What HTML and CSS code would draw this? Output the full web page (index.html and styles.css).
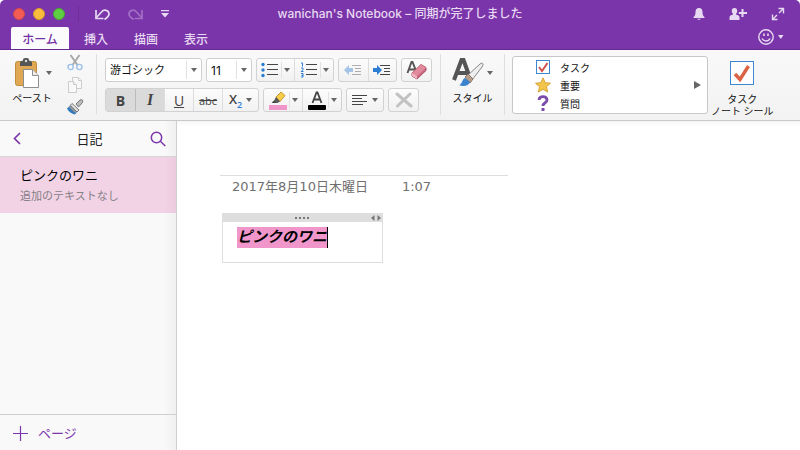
FILE: index.html
```html
<!DOCTYPE html>
<html lang="ja">
<head>
<meta charset="utf-8">
<title>wanichan's Notebook</title>
<link rel="stylesheet" href="styles.css">
</head>
<body>
<div class="window">
  <header class="titlebar">
    <div class="title-row">
      <div class="lights">
        <button class="light red" aria-label="閉じる"></button>
        <button class="light yellow" aria-label="しまう"></button>
        <button class="light green" aria-label="拡大"></button>
      </div>
      <div class="quick">
        <button aria-label="元に戻す"><svg width="17" height="14" viewBox="0 0 17 14" fill="none" stroke="currentColor" stroke-width="1.700"><path d="M2 11 7.500 5C10 2 14.500 3 15 6.500c.3 2.500-1.500 4-4.500 6"/><path d="M2 3v8.500h7.500"/></svg></button>
        <button class="dim" aria-label="やり直し"><svg width="17" height="14" viewBox="0 0 17 14" fill="none" stroke="currentColor" stroke-width="1.700"><path d="M15 11 9.500 5C7 2 2.500 3 2 6.500c-.3 2.500 1.500 4 4.500 6"/><path d="M15 3v8.500H7.500"/></svg></button>
        <button aria-label="カスタマイズ"><svg width="10" height="10" viewBox="0 0 10 10" fill="currentColor"><path d="M1 1h8v1.300H1zM1 4h8L5 8.500z"/></svg></button>
      </div>
      <h1>wanichan's Notebook – 同期が完了しました</h1>
      <div class="window-tools">
        <button aria-label="通知"><svg width="12" height="14" viewBox="0 0 12 14" fill="currentColor"><path d="M6 1c2.600 0 3.500 1.800 3.500 4 0 3 .7 3.800 2 5v1H.5v-1c1.300-1.200 2-2 2-5C2.500 2.800 3.400 1 6 1zM4.300 11.800h3.400C7.500 13.200 4.500 13.200 4.300 11.800z"/></svg></button>
        <button aria-label="共有"><svg width="18" height="14" viewBox="0 0 18 14" fill="currentColor"><path d="M5.500 1c1.900 0 2.700 1.200 2.700 3 0 1.300-.5 2.200-1.200 2.800v.7c2 .6 3.500 1 3.500 3V13H.5v-2.500c0-2 1.500-2.400 3.500-3v-.7C3.300 6.200 2.800 5.300 2.800 4c0-1.800.8-3 2.700-3zM12.500 2h2v3H18v2h-3.500v3h-2V7H9.800V5h2.700z"/></svg></button>
        <button aria-label="全画面"><svg width="14" height="14" viewBox="0 0 14 14" fill="none" stroke="currentColor" stroke-width="1.400"><path d="M7.500 1.500h5V6.500M12.500 1.500 8 6M6.500 12.500h-5V7.500M1.500 12.500 6 8"/></svg></button>
      </div>
    </div>
    <nav class="tabs">
      <a class="active" href="#home">ホーム</a>
      <a href="#insert">挿入</a>
      <a href="#draw">描画</a>
      <a href="#view">表示</a>
      <button class="feedback" aria-label="フィードバック"><svg width="26" height="18" viewBox="0 0 26 18" fill="none" stroke="currentColor" stroke-width="1.400"><circle cx="8" cy="8" r="7.200"/><path d="M4 9.500c1.500 3.300 6.500 3.300 8 0"/><path d="M6 4.500V7M10 4.500V7" stroke-width="1.600"/><path d="M20 6h5.500l-2.700 4z" fill="currentColor" stroke="none"/></svg></button>
    </nav>
  </header>

  <section class="ribbon" aria-label="ホーム">
    <div class="group clipboard">
      <button class="big">
        <span class="big-icon"><svg width="26" height="32" viewBox="0 0 26 32"><rect x="1.500" y="4.500" width="21" height="24" rx="2" fill="#e0a852" stroke="#c18d3c"/><path d="M6 9V5.500C6 4 8 4 9 3.500 9 1 10.500 1 12 1s3 0 3 2.500c1 .5 3 .5 3 2V9z" fill="#565656"/><circle cx="12" cy="4" r="1.200" fill="#ddd"/><path d="M9.500 12.500h9l6 6v12h-15z" fill="#fff" stroke="#8e8e8e"/><path d="M18.500 12.500v6h6" fill="#eee" stroke="#8e8e8e"/></svg><i class="caret"></i></span>
        <span>ペースト</span>
      </button>
      <div class="small-tools">
        <button aria-label="カット"><svg width="16" height="17" viewBox="0 0 16 17" fill="none"><path d="M3.500 1 10.500 11M12.500 1 5.500 11" stroke="#aaa" stroke-width="2"/><circle cx="3.600" cy="13" r="2.600" stroke="#9dc0e8" stroke-width="1.400"/><circle cx="12.400" cy="13" r="2.600" stroke="#9dc0e8" stroke-width="1.400"/></svg></button>
        <button aria-label="コピー"><svg width="16" height="16" viewBox="0 0 16 16" fill="#f8f8f8" stroke="#ccc"><path d="M5.500.5h6l3 3v8h-9z"/><path d="M1.500 4.500h5l3 3v8h-8z"/><path d="M6.500 4.500v3h3M11.500.5v3h3"/></svg></button>
        <button aria-label="書式のコピー"><svg width="18" height="16" viewBox="0 0 18 16"><path d="m10 5 4-4c2-1 3.500.5 2.500 2.500L12.500 8z" fill="#bbb" stroke="#777"/><path d="M6 4.500 13 11 11 13 4.200 6.500z" fill="#e5e0dc" stroke="#777"/><path d="M4.200 6.500 11 13 9 15.500C5.500 15 2.500 12.500 1 9.500z" fill="#3279bd"/><path d="M4 7 10.500 13l-1 1L3 8z" fill="#b29b86"/></svg></button>
      </div>
    </div>

    <div class="group format">
      <div class="tool-row">
        <label class="pick font"><select aria-label="フォント"><option>游ゴシック</option></select><i class="caret"></i></label>
        <label class="pick size"><select aria-label="フォント サイズ"><option>11</option></select><i class="caret"></i></label>
        <div class="segment">
          <button class="wide" aria-label="箇条書き"><svg width="18" height="16" viewBox="0 0 18 16"><g fill="#2b7cd3"><circle cx="2" cy="2.500" r="1.700"/><circle cx="2" cy="8" r="1.700"/><circle cx="2" cy="13.500" r="1.700"/></g><path d="M6 2.500h11M6 7.500h11M6 12.500h11" stroke="#444"/></svg><i class="caret split"></i></button>
          <button class="wide" aria-label="段落番号"><svg width="18" height="16" viewBox="0 0 18 16"><path d="M1 1h1.500v3.500M1 6h2v1.700L1.200 9.500H3.500M1 11.500h2v3.500H1M1.500 13.300H3" fill="none" stroke="#2b7cd3"/><path d="M6 2.500h11M6 7.500h11M6 12.500h11" stroke="#444"/></svg><i class="caret split"></i></button>
        </div>
        <div class="segment">
          <button class="dim-tool" aria-label="インデント解除"><svg width="18" height="14" viewBox="0 0 18 14"><path d="M0 7 5 2v3h4v4H5v3z" fill="#2b7cd3"/><path d="M8 2.500h9M11 5.500h6M11 8.500h6M8 11.500h9" stroke="#444"/></svg></button>
          <button aria-label="インデント"><svg width="18" height="14" viewBox="0 0 18 14"><path d="M9 7 4 2v3H0v4h4v3z" fill="#2b7cd3"/><path d="M7 2.500h10M11 5.500h6M11 8.500h6M7 11.500h10" stroke="#444"/></svg></button>
        </div>
        <div class="segment">
          <button aria-label="書式のクリア"><svg width="22" height="20" viewBox="0 0 22 20"><path d="M1.500 13 5.500 2h1L10.500 12M3 9.500h6" fill="none" stroke="#555" stroke-width="1.900"/><path d="m6 13 9-8.500 5 3v3l-9 8.500-5-3z" fill="#c96a80" stroke="#a94b63"/><path d="m6 13 9-8.500 5 3-9 8.500z" fill="#e28a9d"/><path d="m6 13 5 3v3l-5-3z" fill="#f0b7c2"/></svg></button>
        </div>
      </div>
      <div class="tool-row">
        <div class="segment">
          <button class="on" aria-label="太字"><b>B</b></button>
          <button class="on" aria-label="斜体"><em>I</em></button>
          <button aria-label="下線"><u>U</u></button>
          <button aria-label="取り消し線"><s>abc</s></button>
          <button class="menu" aria-label="下付き"><span class="subscript">X<sub>2</sub></span><i class="caret"></i></button>
        </div>
        <div class="segment">
          <button class="wide" aria-label="蛍光ペン"><svg width="18" height="19" viewBox="0 0 18 19"><path d="m7 6 5-5 4 3.500-5 6z" fill="#f7ce4c" stroke="#c59a2b"/><path d="m7 6 4 4.500-2.500 1.500-3-3z" fill="#555"/><path d="m5.500 9 3 3H2.500z" fill="#444"/><path d="M0 14h18v5H0z" fill="#f096cb"/></svg><i class="caret split"></i></button>
          <button class="wide" aria-label="フォントの色"><svg width="18" height="19" viewBox="0 0 18 19"><path d="M4.500 12 8.500 1.500h1L13.500 12M6 8.500h6" fill="none" stroke="#444" stroke-width="1.800"/><rect y="14" width="18" height="5" rx="1"/></svg><i class="caret split"></i></button>
        </div>
        <div class="segment">
          <button class="menu" aria-label="配置"><svg width="16" height="12" viewBox="0 0 16 12" stroke="#444"><path d="M0 1.500h15M0 4.500h10M0 7.500h15M0 10.500h11"/></svg><i class="caret"></i></button>
        </div>
        <div class="segment">
          <button aria-label="削除"><svg width="18" height="16" viewBox="0 0 18 16" fill="none" stroke="#c2c2c2" stroke-width="3" stroke-linecap="round"><path d="m2 2 14 12M15 2 2.500 14"/></svg></button>
        </div>
      </div>
    </div>

    <div class="group styles">
      <button class="big">
        <span class="big-icon"><svg width="32" height="32" viewBox="0 0 32 32"><path d="M2 23 9.500 3h2L18 21M5.500 16h10" fill="none" stroke="#555" stroke-width="4"/><path d="m15 19 13-12c3-2 4 0 2 3L20 23z" fill="#eee" stroke="#888"/><path d="m13 20 3-3 5 5-3 4z" fill="#b79f8b" stroke="#887464"/><path d="M7 28c3 0 3-6 6-7l5 4c-1 4-7 5-11 3z" fill="#3b83cc"/></svg><i class="caret"></i></span>
        <span>スタイル</span>
      </button>
    </div>

    <div class="group tags">
      <div class="gallery">
        <ul>
          <li><svg width="16" height="16" viewBox="0 0 16 16"><rect x="1.500" y="1.500" width="13" height="13" fill="#fff" stroke="#3c87d0"/><path d="m4 8 3 4 5.500-8" fill="none" stroke="#d0504b" stroke-width="2"/></svg>タスク</li>
          <li><svg width="16" height="16" viewBox="0 0 16 16"><path d="m8 .8 2.200 4.900 5.300.5-4 3.600 1.200 5.300L8 12.300l-4.700 2.800 1.200-5.300-4-3.600 5.300-.5z" fill="#f2c44c" stroke="#d6a536"/></svg>重要</li>
          <li><svg width="16" height="16" viewBox="0 0 16 16"><path d="M4 5c0-4.500 8-4.500 8 0 0 3-4 2.500-4 6" fill="none" stroke="#7b4bab" stroke-width="2.800"/><path d="M6.500 13h3v3h-3z" fill="#7b4bab"/></svg>質問</li>
        </ul>
        <button aria-label="その他のノート シール"><svg width="7" height="10" viewBox="0 0 7 10" fill="#666"><path d="m0 1 7 4-7 4z"/></svg></button>
      </div>
      <button class="big tag-button">
        <svg width="26" height="26" viewBox="0 0 26 26"><rect x="1.500" y="1.500" width="23" height="23" fill="#fff" stroke="#3c87d0"/><path d="m6 14 5 5.500L19.500 6" fill="none" stroke="#db6242" stroke-width="3.400"/></svg>
        <span>タスク<br>ノート シール</span>
      </button>
    </div>
  </section>

  <div class="workspace">
    <aside class="pages">
      <div class="section-head">
        <button aria-label="戻る"><svg width="8" height="13" viewBox="0 0 8 13" fill="none" stroke="currentColor" stroke-width="1.700"><path d="M7 1 1.500 6.500 7 12"/></svg></button>
        <h2>日記</h2>
        <button aria-label="検索"><svg width="16" height="16" viewBox="0 0 16 16" fill="none" stroke="currentColor" stroke-width="1.500"><circle cx="6.500" cy="6.500" r="5.200"/><path d="m10.300 10.300 5 4.700"/></svg></button>
      </div>
      <a class="page-item" href="#page"><strong>ピンクのワニ</strong><span>追加のテキストなし</span></a>
      <button class="add-page"><svg width="16" height="16" viewBox="0 0 16 16" stroke="currentColor" stroke-width="1.200"><path d="M8.500 1v15M1 8.500h15"/></svg>ページ</button>
    </aside>
    <main class="canvas" id="page">
      <div class="page-date"><time>2017年8月10日木曜日</time><time>1:07</time></div>
      <article class="note">
        <div class="note-handle"><svg class="grip" width="14" height="2" viewBox="0 0 14 2" fill="#777"><path d="M0 0h2v2H0zM4 0h2v2H4zM8 0h2v2H8zM12 0h2v2h-2z"/></svg><svg width="10" height="6" viewBox="0 0 10 6" fill="#777"><path d="M3.500 0v6L0 3zM6.500 0v6L10 3z"/></svg></div>
        <p contenteditable="true"><mark>ピンクのワニ</mark></p>
      </article>
    </main>
  </div>
</div>
</body>
</html>
```
FILE: styles.css
```css
* { box-sizing: border-box; }
body {
  margin: 0;
  background: #fff;
  color: #222;
  font-family: Roboto, "Noto Sans CJK JP", sans-serif;
  font-size: 12px;
}
button {
  display: flex;
  align-items: center;
  justify-content: center;
  padding: 0;
  border: 0;
  background: none;
  color: inherit;
  font: inherit;
}
svg { display: block; flex: none; }
a { color: inherit; text-decoration: none; }
h1, h2, p, ul { margin: 0; padding: 0; }

.window { display: flex; flex-direction: column; min-height: 100vh; }

.titlebar { background: #7935a9; border-bottom: 1px solid #652a91; color: #e8d9f2; border-radius: 5px 5px 0 0; }
.title-row { display: grid; grid-template-columns: 1fr auto 1fr; align-items: center; height: 27px; }
.lights { grid-area: 1 / 1; display: flex; gap: 8px; padding-left: 13px; }
.light { width: 12px; height: 12px; border-radius: 50%; border: 1px solid; }
.red { background: #f35c55; border-color: #d44a48; }
.yellow { background: #f9bd3e; border-color: #d99b30; }
.green { background: #5fce43; border-color: #48ab31; }
.quick { grid-area: 1 / 1; display: flex; align-items: center; gap: 16px; margin-left: 78px; padding-left: 15px; border-left: 1px solid #6d2e9a; height: 16px; }
.quick .dim { color: #a26fc4; }
.title-row h1 { grid-column: 2; font: 500 12px/16px Inter, "Noto Sans CJK JP", sans-serif; }
.window-tools { display: flex; justify-content: flex-end; gap: 24px; padding-right: 15px; }
.tabs { display: flex; align-items: stretch; height: 22px; padding: 0 16px 0 11px; }
.tabs a { display: flex; align-items: center; justify-content: center; width: 50px; font-weight: 500; }
.tabs a:nth-of-type(2) { margin-left: 2px; }
.tabs .active { width: 58px; background: #fbfbfb; color: #7430a5; border-radius: 2px 2px 0 0; }
.feedback { margin-left: auto; align-self: center; }

.ribbon { display: flex; align-items: stretch; height: 71px; background: linear-gradient(#f9f9f9, #f2f2f2); border-bottom: 1px solid #c9c9c9; color: #111; font-size: 10px; }
.group { position: relative; display: flex; padding: 4px 0; }
.group + .group::before { content: ""; align-self: stretch; width: 1px; margin-bottom: 1px; background: #dedede; }
.caret { flex: none; width: 0; height: 0; border: 3px solid transparent; border-top: 4px solid #666; border-bottom: 0; }
.big { flex-direction: column; justify-content: flex-start; line-height: 16px; }
.big-icon { display: flex; align-items: center; gap: 6px; height: 37px; }
.clipboard { width: 96px; padding-left: 12px; gap: 14px; }
.clipboard .big .big-icon { padding-left: 2px; }
.small-tools { display: flex; flex-direction: column; justify-content: space-between; align-items: center; padding-bottom: 1px; }

.format { flex-direction: column; justify-content: flex-start; gap: 6px; padding: 8px 8px 8px 9px; width: 344px; }
.group.format::before { position: absolute; left: 0; top: 4px; bottom: 5px; }
.tool-row { display: flex; gap: 4px; height: 24px; }
.segment { display: flex; border: 1px solid #d2d2d2; border-radius: 3px; background: linear-gradient(#fcfcfc, #f1f1f1); overflow: hidden; }
.segment button { width: 29px; color: #444; font-family: "Open Sans", sans-serif; font-size: 13px; }
.segment button + button { border-left: 1px solid #ddd; }
.segment .wide { width: 38px; gap: 5px; }
.segment .wide + .wide { width: 39px; }
.segment .menu { width: 36px; gap: 4px; }
.segment .on { background: #dadada; }
.segment button.on + .on { border-color: #bbb; }
.wide .split { position: relative; }
.wide .split::before { content: ""; position: absolute; left: -6px; top: -10px; width: 1px; height: 16px; background: #e2e2e2; }
.segment b { font-size: 14px; }
.segment em { font-family: "Liberation Serif", serif; font-size: 16px; font-weight: bold; }
.segment u { font-size: 14px; }
.segment s { font-size: 11px; }
.subscript { font-weight: 600; }
.subscript sub { color: #2b7cd3; font-size: 9px; }
.dim-tool svg { opacity: .4; }
.pick { display: flex; align-items: center; background: #fff; border: 1px solid #cfcfcf; border-radius: 3px; padding-right: 4px; }
.pick select { flex: 1; min-width: 0; height: 18px; margin-right: 4px; padding: 0 0 0 4px; border: 0; border-right: 1px solid #e2e2e2; background: none; appearance: none; color: #111; font: 12px Inter, "Noto Sans CJK JP", sans-serif; }
.pick.font select { font-size: 11px; }
.font { width: 98px; }
.size { width: 46px; }

.styles { width: 64px; }
.styles .big { flex: 1; }
.styles .big-icon { gap: 3px; }
.tags { flex: 1; gap: 7px; }
.gallery { display: flex; align-items: center; width: 196px; margin: 2px 0; padding: 0 6px 0 22px; border: 1px solid #c8c8c8; border-radius: 3px; background: #fff; }
.gallery ul { flex: 1; list-style: none; }
.gallery li { display: flex; align-items: center; gap: 9px; height: 18px; }
.tag-button { line-height: 12px; padding-top: 6px; gap: 8px; margin-left: -4px; }

.workspace { display: flex; flex: 1; }
.pages { display: flex; flex-direction: column; width: 177px; border-right: 1px solid #cfcfcf; background: linear-gradient(to left, #f0f0f0, #f9f9f9 12px); color: #7c36ac; }
.section-head { display: grid; grid-template-columns: 1fr auto 1fr; align-items: center; height: 36px; padding: 0 10px 0 13px; border-bottom: 1px solid #d5d5d5; }
.section-head button { justify-self: start; }
.section-head button:last-child { justify-self: end; }
.section-head h2 { color: #222; font-size: 13px; font-weight: 400; }
.page-item { display: flex; flex-direction: column; gap: 3px; height: 56px; padding: 9px 20px; background: linear-gradient(to left, #ebcbdd, #f2d3e5 12px); color: #000; }
.page-item strong { font-size: 13px; line-height: 19px; font-weight: 400; }
.page-item span { color: #858085; font-size: 11px; line-height: 17px; }
.add-page { justify-content: flex-start; gap: 10px; height: 36px; margin-top: auto; padding-left: 12px; border-top: 1px solid #cfcfcf; font-size: 13px; }

.canvas { flex: 1; padding: 54px 43px; background: linear-gradient(#f5f5f5, #fff 5px); }
.page-date { display: flex; gap: 34px; width: 288px; padding: 2px 12px; border-top: 1px solid #dedede; color: #707070; font: 13px/18px "DejaVu Sans", "Noto Sans CJK JP", sans-serif; }
.note { width: 161px; min-height: 50px; margin: 15px 2px; border: 1px solid #dedede; }
.note-handle { display: grid; grid-template-columns: 1fr auto 1fr; align-items: center; justify-items: end; height: 8px; padding-right: 1px; background: #dedede; }
.grip { grid-column: 2; }
.note p { padding: 5px 14px; outline: 0; }
.note mark { display: inline-block; padding-bottom: 3px; border-right: 1px solid #000; background: #f096cb; color: #000; font: italic bold 15px/18px "Noto Sans CJK JP", sans-serif; }
```
